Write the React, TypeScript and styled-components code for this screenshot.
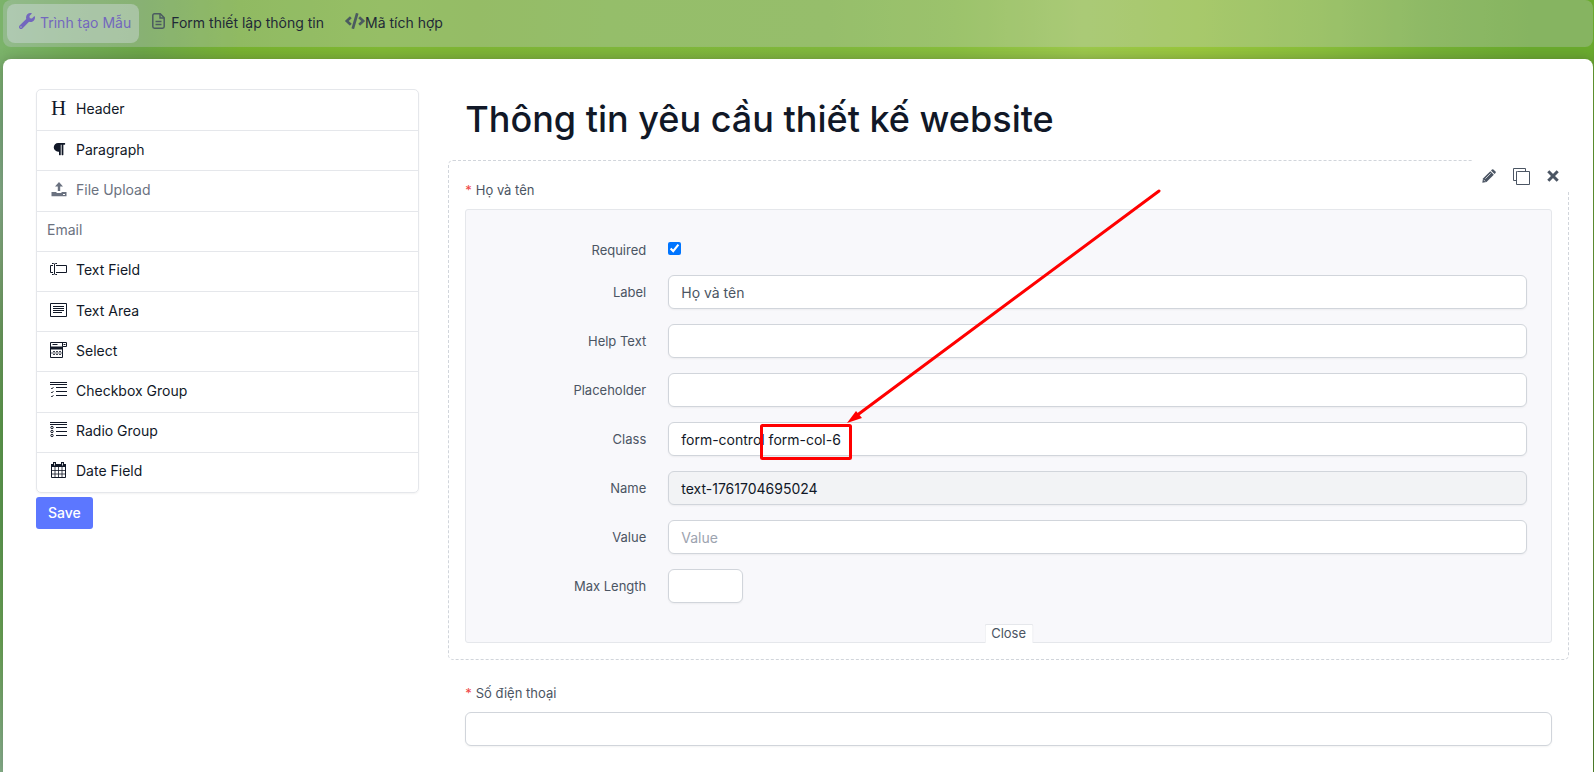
import React from "react";
import styled, { createGlobalStyle, css } from "styled-components";
import { FaParagraph, FaWrench, FaCode } from "react-icons/fa";

const GlobalStyle = createGlobalStyle`
  *, *::before, *::after { box-sizing: border-box; }
  body {
    margin: 0;
    font-family: Inter, "Noto Sans", sans-serif;
    font-size: 14px;
    line-height: 20px;
    color: #111827;
  }
  ul { list-style: none; margin: 0; padding: 0; }
  h1 { margin: 0; }
  button, input { font: inherit; color: inherit; }
`;

const Page = styled.div`
  display: flex;
  flex-direction: column;
  gap: 12px;
  min-height: 100vh;
  padding: 0 1px 0 3px;
  background:
    linear-gradient(180deg, #7bb36a 0%, #7bb36a 7%, #76a777 16%, #83ad86 25%, #7ca674 33%,
      #689b5a 43%, #5a9a48 55%, #5a9a4c 68%, #68a552 83%, #85b088 98%) left / 3px 100% no-repeat,
    linear-gradient(180deg, #6aaa2e 0%, #5f9a2b 20%, #6a9a3a 62%, #4e8526 90%) right / 1px 100% no-repeat,
    linear-gradient(90deg, #7bb36a 0%, #72ac57 4%, #6ca647 9%, #78b230 15%, #80b835 24%,
      #7eb535 30%, #7fb73b 38%, #80b83c 52%, #88be3d 60%, #9cc84c 68%, #98c63c 75%,
      #88bd3a 83%, #74b034 90%, #6aaa2e 96%, #6aaa2e 100%);
`;

const TabBar = styled.nav`
  display: flex;
  align-items: center;
  gap: 1px;
  padding: 4px;
  border-radius: 8px;
  background: rgba(210, 210, 230, 0.28);
`;

const Tab = styled.button<{ $active?: boolean; $gap: number }>`
  display: flex;
  align-items: center;
  gap: ${(p) => p.$gap}px;
  height: 39px;
  padding: 0 8px 2px 12px;
  border: 0;
  border-radius: 8px;
  background: ${(p) => (p.$active ? "rgba(220, 226, 240, 0.38)" : "transparent")};
  color: ${(p) => (p.$active ? "#7367be" : "#1f2937")};
  cursor: pointer;
  svg {
    flex: none;
    margin-bottom: 3px;
    color: ${(p) => (p.$active ? "#7367be" : "#4b5b60")};
  }
`;

const Card = styled.main`
  flex: 1;
  display: flex;
  align-items: flex-start;
  gap: 29px;
  padding: 30px 24px 10px 33px;
  border-radius: 8px 8px 0 0;
  background: #fff;
  box-shadow: 0 0 12px rgba(60, 60, 60, 0.35);
`;

const Palette = styled.aside`
  flex: 0 0 25%;
`;

const ControlList = styled.ul`
  display: grid;
  grid-auto-rows: 1fr;
  min-height: 404px;
  border: 1px solid #e5e7eb;
  border-radius: 5px;
  box-shadow: 0 1px 2px rgba(0, 0, 0, 0.05);
`;

const ControlItem = styled.li<{ $disabled?: boolean }>`
  display: flex;
  align-items: center;
  gap: 9px;
  padding: 0 10px 2px;
  color: ${(p) => (p.$disabled ? "#6b7280" : "#111827")};
  cursor: move;
  & + & { border-top: 1px solid #e5e7eb; }
`;

const ControlIcon = styled.span`
  display: flex;
  align-items: center;
  justify-content: center;
  width: 17px;
  height: 20px;
  margin: 0 0 2px 3px;
`;

const SerifLetter = styled.span`
  font-family: "Liberation Serif", serif;
  font-size: 21px;
`;

const SaveButton = styled.button`
  margin-top: 4px;
  height: 32px;
  padding: 0 12px;
  border: 0;
  border-radius: 3px;
  background: #5c77ff;
  color: #fff;
  font-weight: 500;
  cursor: pointer;
`;

const Stage = styled.section`
  flex: 1;
  min-width: 0;
`;

const Title = styled.h1`
  padding: 8px 17px 18px;
  font-size: 36px;
  line-height: 45px;
  font-weight: 500;
`;

const Field = styled.div<{ $editing?: boolean }>`
  position: relative;
  padding: 19px 16px 16px;
  border: 1px dashed transparent;
  border-radius: 5px;
  ${(p) => p.$editing && css`border-color: #d1d5db;`}
  & + & { margin-top: 3px; }
`;

const FieldLabel = styled.label`
  display: block;
  margin-bottom: 9px;
  font-size: 13px;
  line-height: 20px;
  color: #4b5563;
`;

const Asterisk = styled.span`
  margin-right: 4px;
  color: #ef4444;
`;

const Actions = styled.div`
  position: absolute;
  top: -1px;
  right: -1px;
  display: flex;
  width: 96px;
  height: 32px;
  background: #fff;
`;

const ActionButton = styled.button`
  flex: 1;
  display: flex;
  align-items: center;
  justify-content: center;
  padding: 0;
  border: 0;
  background: none;
  color: #4b5563;
  cursor: pointer;
`;

const EditPanel = styled.div`
  position: relative;
  padding: 30px 24px 39px 0;
  border: 1px solid #e5e7eb;
  border-radius: 3px;
  background: #f8f8fb;
`;

const FormRow = styled.div`
  display: grid;
  grid-template-columns: 180px 1fr;
  column-gap: 22px;
  align-items: center;
  justify-items: start;
  & + & { margin-top: 15px; }
`;

const RowLabel = styled.label`
  justify-self: end;
  font-size: 13px;
  line-height: 20px;
  color: #4b5563;
`;

const Checkbox = styled.input`
  width: 13px;
  height: 13px;
  margin: 0 0 4px;
  accent-color: #0075ff;
`;

const TextInput = styled.input<{ $tone?: "muted"; $narrow?: boolean }>`
  display: block;
  width: ${(p) => (p.$narrow ? "75px" : "100%")};
  height: 34px;
  padding: 1px 12px 0;
  border: 1px solid #d1d5db;
  border-radius: 6px;
  outline: 0;
  background: #fff;
  box-shadow: 0 1px 2px rgba(0, 0, 0, 0.05);
  color: ${(p) => (p.$tone === "muted" ? "#4b5563" : "#111827")};
  &:disabled { background: #f2f3f5; color: #111827; }
  &::placeholder { color: #9ca3af; opacity: 1; }
`;

const CloseButton = styled.button`
  position: absolute;
  bottom: -1px;
  left: 50%;
  transform: translateX(-50%);
  height: 19px;
  padding: 0 6px 2px;
  border: 1px solid #e5e7eb;
  border-bottom: 0;
  border-radius: 2px 2px 0 0;
  background: #fff;
  font-size: 13px;
  line-height: 16px;
  color: #4b5563;
  cursor: pointer;
`;

const Annotation = styled.svg`
  position: absolute;
  top: -21px;
  left: 294px;
  pointer-events: none;
`;

const Outline = ({ children }: { children: React.ReactNode }) => (
  <svg width="17" height="16" viewBox="0 0 17 16" fill="none" stroke="currentColor" aria-hidden="true">
    {children}
  </svg>
);

const DocumentIcon = () => (
  <svg width="13" height="16" viewBox="0 0 13 16" fill="none" stroke="currentColor" aria-hidden="true">
    <path d="M8.300.8H2.500A1.700 1.700 0 0 0 .8 2.500v11a1.700 1.700 0 0 0 1.700 1.700h8a1.700 1.700 0 0 0 1.700-1.700V4.700z" strokeWidth="1.500" strokeLinejoin="round" />
    <path d="M8 1v4h4" strokeWidth="1.400" />
    <path d="M3.500 8.500h6M3.500 11.500h6" strokeWidth="1.300" />
  </svg>
);

const UploadIcon = () => (
  <svg width="16" height="16" viewBox="0 0 16 16" fill="currentColor" aria-hidden="true">
    <path d="M8 1l4 4.500H9.200V10H6.800V5.500H4z" />
    <path d="M.5 11H5l1 1h4l1-1h4.500v4.200H.5z" />
    <path d="M12 13.500h2" stroke="#fff" />
  </svg>
);

const TextFieldIcon = () => (
  <Outline>
    <path d="M3 4.500H.5v7H3M6 4.500h10.500v7H6M4.500 3v10M2 2.500h1.500l1 .5 1-.5H7M2 13.500h1.500l1-.5 1 .5H7" />
  </Outline>
);

const TextAreaIcon = () => (
  <Outline>
    <path d="M.5 1.500h16v13H.5zM3 4.500h11M3 6.500h11M3 8.500h11M3 10.500h9" />
  </Outline>
);

const SelectIcon = () => (
  <Outline>
    <path d="M.5.5h16v4h-4M.5.5v15h12V4.500M12.500.5v4M2.500 2.500h5" />
    <path d="M1 6h11" strokeWidth="3" />
    <path d="M3 9.500h8M3 12.500h8" strokeDasharray="2 1" strokeWidth=".8" />
    <path d="M1 11h11" strokeWidth=".7" />
    <path d="M13.500 2.500h2" />
  </Outline>
);

const CheckboxGroupIcon = () => (
  <Outline>
    <path d="M0 .5h17M0 2.500h17M6 5.500h11M6 9.500h11M6 13.500h11" />
    <path d="M1 6l1 1 1.500-2M1 10l1 1 1.500-2M1 14l1 1 1.500-2" strokeWidth=".8" />
  </Outline>
);

const RadioGroupIcon = () => (
  <Outline>
    <path d="M0 .5h17M0 2.500h17M6 5.500h11M6 9.500h11M6 13.500h11" />
    <circle cx="2" cy="5.500" r="1.200" />
    <circle cx="2" cy="9.500" r="1.200" />
    <circle cx="2" cy="13.500" r="1.200" />
  </Outline>
);

const CalendarIcon = () => (
  <Outline>
    <path d="M1.500 2v13.500h14V2" />
    <path d="M1 3.500h15" strokeWidth="3" />
    <path d="M4.500 0v3M12.500 0v3" strokeWidth="3" />
    <path d="M4.500 1v2.500M12.500 1v2.500" stroke="#fff" strokeWidth=".8" />
    <path d="M1 8.500h15M1 12h15M5 5v10.500M8.500 5v10.500M12 5v10.500" strokeWidth=".8" />
  </Outline>
);

const PencilIcon = () => (
  <svg width="14" height="14" viewBox="0 0 14 14" fill="currentColor" aria-hidden="true">
    <path d="M.3 13.700l.7-4.200L8.300 2.200l3.500 3.500L4.500 13z" />
    <path d="M9 1.500L10 .5a1 1 0 0 1 1.400 0l2.100 2.100a1 1 0 0 1 0 1.400l-1 1z" />
    <path d="M3.300 9.700l5.400-5.400M1.600 10.800l1.600 1.600" stroke="#fff" strokeWidth=".7" />
  </svg>
);

const CopyIcon = () => (
  <svg width="17" height="17" viewBox="0 0 17 17" fill="none" stroke="currentColor" aria-hidden="true">
    <path d="M3.500 12.500h-3V.5h12v3" strokeLinejoin="round" />
    <path d="M4.500 3.500h12v13h-13v-13z" strokeLinejoin="round" />
  </svg>
);

const RemoveIcon = () => (
  <svg width="12" height="12" viewBox="0 0 12 12" stroke="currentColor" aria-hidden="true">
    <path d="M1.300 1.300l9.400 9.400M10.700 1.300l-9.400 9.400" strokeWidth="3" />
  </svg>
);

const controls: { label: string; icon?: React.ReactNode; disabled?: boolean }[] = [
  { label: "Header", icon: <SerifLetter aria-hidden="true">H</SerifLetter> },
  { label: "Paragraph", icon: <FaParagraph size={14} /> },
  { label: "File Upload", icon: <UploadIcon />, disabled: true },
  { label: "Email", disabled: true },
  { label: "Text Field", icon: <TextFieldIcon /> },
  { label: "Text Area", icon: <TextAreaIcon /> },
  { label: "Select", icon: <SelectIcon /> },
  { label: "Checkbox Group", icon: <CheckboxGroupIcon /> },
  { label: "Radio Group", icon: <RadioGroupIcon /> },
  { label: "Date Field", icon: <CalendarIcon /> },
];

export default function App() {
  return (
    <>
      <GlobalStyle />
      <Page>
        <TabBar>
          <Tab type="button" $active $gap={5}><FaWrench size={16} />Trình tạo Mẫu</Tab>
          <Tab type="button" $gap={6}><DocumentIcon />Form thiết lập thông tin</Tab>
          <Tab type="button" $gap={0}><FaCode size={20} />Mã tích hợp</Tab>
        </TabBar>
        <Card>
          <Palette>
            <ControlList>
              {controls.map((c) => (
                <ControlItem key={c.label} $disabled={c.disabled}>
                  {c.icon && <ControlIcon>{c.icon}</ControlIcon>}
                  {c.label}
                </ControlItem>
              ))}
            </ControlList>
            <SaveButton type="button">Save</SaveButton>
          </Palette>
          <Stage>
            <Title>Thông tin yêu cầu thiết kế website</Title>
            <Field $editing>
              <FieldLabel as="div"><Asterisk>*</Asterisk>Họ và tên</FieldLabel>
              <Actions>
                <ActionButton type="button" aria-label="Edit"><PencilIcon /></ActionButton>
                <ActionButton type="button" aria-label="Copy"><CopyIcon /></ActionButton>
                <ActionButton type="button" aria-label="Remove"><RemoveIcon /></ActionButton>
              </Actions>
              <EditPanel>
                <FormRow>
                  <RowLabel htmlFor="required">Required</RowLabel>
                  <Checkbox id="required" type="checkbox" defaultChecked />
                </FormRow>
                <FormRow>
                  <RowLabel htmlFor="label">Label</RowLabel>
                  <TextInput id="label" $tone="muted" defaultValue="Họ và tên" />
                </FormRow>
                <FormRow>
                  <RowLabel htmlFor="help">Help Text</RowLabel>
                  <TextInput id="help" />
                </FormRow>
                <FormRow>
                  <RowLabel htmlFor="placeholder">Placeholder</RowLabel>
                  <TextInput id="placeholder" />
                </FormRow>
                <FormRow>
                  <RowLabel htmlFor="class">Class</RowLabel>
                  <TextInput id="class" defaultValue="form-control form-col-6" />
                </FormRow>
                <FormRow>
                  <RowLabel htmlFor="name">Name</RowLabel>
                  <TextInput id="name" defaultValue="text-1761704695024" disabled />
                </FormRow>
                <FormRow>
                  <RowLabel htmlFor="value">Value</RowLabel>
                  <TextInput id="value" placeholder="Value" />
                </FormRow>
                <FormRow>
                  <RowLabel htmlFor="maxlength">Max Length</RowLabel>
                  <TextInput id="maxlength" $narrow />
                </FormRow>
                <CloseButton type="button">Close</CloseButton>
                <Annotation width="402" height="274" viewBox="0 0 402 274" fill="none" stroke="#f00" strokeWidth="3" aria-hidden="true">
                  <rect x="1.500" y="236.500" width="89" height="33" rx="1" />
                  <path d="M399 2L96 227" strokeLinecap="round" />
                  <path d="M87 234l9-12 6 7z" fill="#f00" stroke="none" />
                </Annotation>
              </EditPanel>
            </Field>
            <Field>
              <FieldLabel htmlFor="phone"><Asterisk>*</Asterisk>Số điện thoại</FieldLabel>
              <TextInput id="phone" />
            </Field>
          </Stage>
        </Card>
      </Page>
    </>
  );
}
